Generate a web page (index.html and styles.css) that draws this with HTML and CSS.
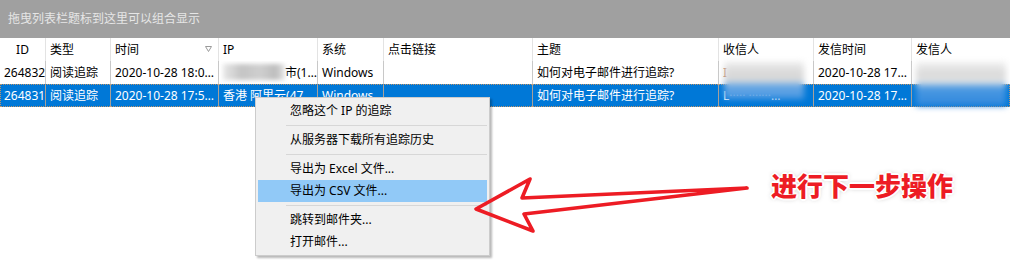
FILE: index.html
```html
<!DOCTYPE html>
<html lang="zh-CN">
<head>
<meta charset="utf-8">
<title>追踪列表</title>
<link rel="stylesheet" href="styles.css">
</head>
<body>
<div class="app">
  <div class="group-bar">拖曳列表栏题标到这里可以组合显示</div>
  <div class="grid">
    <div class="row head">
      <div class="cell center">ID</div>
      <div class="cell">类型</div>
      <div class="cell sort">时间<svg class="sort-ico" width="7" height="6" viewBox="0 0 7 6"><path d="M0.5 0.5 H6.5 L3.5 5.5 Z" fill="none" stroke="#9a9a9a" stroke-width="1"/></svg></div>
      <div class="cell">IP</div>
      <div class="cell">系统</div>
      <div class="cell">点击链接</div>
      <div class="cell">主题</div>
      <div class="cell">收信人</div>
      <div class="cell">发信时间</div>
      <div class="cell last">发信人</div>
    </div>
    <div class="row data">
      <div class="cell right">264832</div>
      <div class="cell">阅读追踪</div>
      <div class="cell">2020-10-28 18:0…</div>
      <div class="cell"><span class="ip-blur"></span>市(1…</div>
      <div class="cell">Windows</div>
      <div class="cell"></div>
      <div class="cell">如何对电子邮件进行追踪?</div>
      <div class="cell"><span class="mark">I</span></div>
      <div class="cell">2020-10-28 17…</div>
      <div class="cell last"></div>
    </div>
    <div class="row data sel">
      <div class="cell right">264831</div>
      <div class="cell">阅读追踪</div>
      <div class="cell">2020-10-28 17:5…</div>
      <div class="cell">香港 阿里云(47</div>
      <div class="cell">Windows</div>
      <div class="cell"></div>
      <div class="cell">如何对电子邮件进行追踪?</div>
      <div class="cell">L····· ·······…</div>
      <div class="cell">2020-10-28 17…</div>
      <div class="cell last"></div>
    </div>
  </div>

  <div class="blur blur-rcpt"></div>
  <div class="blur blur-sender"></div>

  <div class="menu">
    <div class="item">忽略这个 IP 的追踪</div>
    <div class="sep"></div>
    <div class="item">从服务器下载所有追踪历史</div>
    <div class="sep"></div>
    <div class="item">导出为 Excel 文件...</div>
    <div class="item hot">导出为 CSV 文件...</div>
    <div class="sep"></div>
    <div class="item">跳转到邮件夹...</div>
    <div class="item">打开邮件...</div>
  </div>

  <svg class="arrow" width="1010" height="278" viewBox="0 0 1010 278">
    <polygon points="747,188 522,198 530,179 476,209 533,231 524,214" fill="none" stroke="#ed1c24" stroke-width="3.6" stroke-linejoin="round"/>
  </svg>
  <div class="note">进行下一步操作</div>
</div>
</body>
</html>
```
FILE: styles.css
```css
html, body {
  margin: 0;
  padding: 0;
  background: #ffffff;
}

body {
  font-family: "Noto Sans", "Noto Sans CJK SC", sans-serif;
  font-size: 12px;
  color: #000;
}

.app {
  position: relative;
  width: 1010px;
  height: 278px;
  overflow: hidden;
  background: #fff;
}

.group-bar {
  height: 38px;
  line-height: 38px;
  background: #a0a0a0;
  color: #e6e6e6;
  padding-left: 8px;
  box-sizing: border-box;
}

.grid {
  display: flex;
  flex-direction: column;
}

.row {
  display: grid;
  grid-template-columns: 46px 65px 108px 99px 66px 149px 186px 95px 98px 98px;
  height: 23px;
}

.cell {
  box-sizing: border-box;
  padding: 0 4px;
  line-height: 23px;
  white-space: nowrap;
  overflow: hidden;
  border-right: 1px solid #c8c8c8;
}

.cell.last {
  border-right: none;
}

.head .cell {
  border-right-color: #e3e3e3;
  color: #000;
}

.cell.center {
  text-align: center;
}

.cell.right {
  text-align: right;
  padding-right: 2px;
}

.cell.sort {
  display: flex;
  align-items: center;
  justify-content: space-between;
}

.sort-ico {
  margin-right: 2px;
  margin-top: -2px;
}

.ip-blur {
  display: inline-block;
  vertical-align: middle;
  width: 62px;
  height: 16px;
  margin-top: -3px;
  background: linear-gradient(90deg, #e8e8e8, #c4c4c4 30%, #cfcfcf 60%, #bdbdbd 85%, #e8e8e8);
  filter: blur(2px);
}

.mark {
  color: #a0522d;
}

.data.sel {
  background: #0078d7;
  color: #fff;
  outline: 1px dotted #c09468;
  outline-offset: -1px;
}

.data.sel .cell {
  border-right-color: #a8a098;
}

.blur {
  position: absolute;
  filter: blur(3px);
}

.blur-rcpt {
  left: 724px;
  top: 62px;
  width: 80px;
  height: 37px;
  background: linear-gradient(180deg, #ececec 0%, #d6d6d6 35%, #dcdcdc 52%, #6aa8e4 62%, #4a98e2 100%);
}

.blur-sender {
  left: 916px;
  top: 62px;
  width: 90px;
  height: 44px;
  background: linear-gradient(180deg, #f0f0f0 0%, #d8d8d8 30%, #e6e6e6 45%, #4d9ae2 58%, #2f88dd 100%);
}

.menu {
  position: absolute;
  left: 255px;
  top: 97px;
  width: 229px;
  padding: 2px;
  border: 1px solid #cccccc;
  background: #f0f0f0;
  box-shadow: 2px 2px 2px rgba(0, 0, 0, 0.28);
}

.item {
  height: 22px;
  line-height: 22px;
  padding-left: 32px;
  white-space: nowrap;
}

.item.hot {
  background: #91c9f7;
}

.sep {
  height: 1px;
  margin: 3px 0 3px 28px;
  background: #d7d7d7;
}

.arrow {
  position: absolute;
  left: 0;
  top: 0;
  pointer-events: none;
}

.note {
  position: absolute;
  left: 771px;
  top: 169px;
  font-family: "Noto Sans CJK SC", sans-serif;
  font-weight: 900;
  font-size: 26px;
  line-height: 32px;
  color: #ed1c24;
  white-space: nowrap;
  text-shadow:
    1px 1px 0 #fff, -1px -1px 0 #fff, 1px -1px 0 #fff, -1px 1px 0 #fff,
    2px 0 0 #fff, -2px 0 0 #fff, 0 2px 0 #fff, 0 -2px 0 #fff,
    0 0 5px rgba(0, 0, 0, 0.35);
}
```
